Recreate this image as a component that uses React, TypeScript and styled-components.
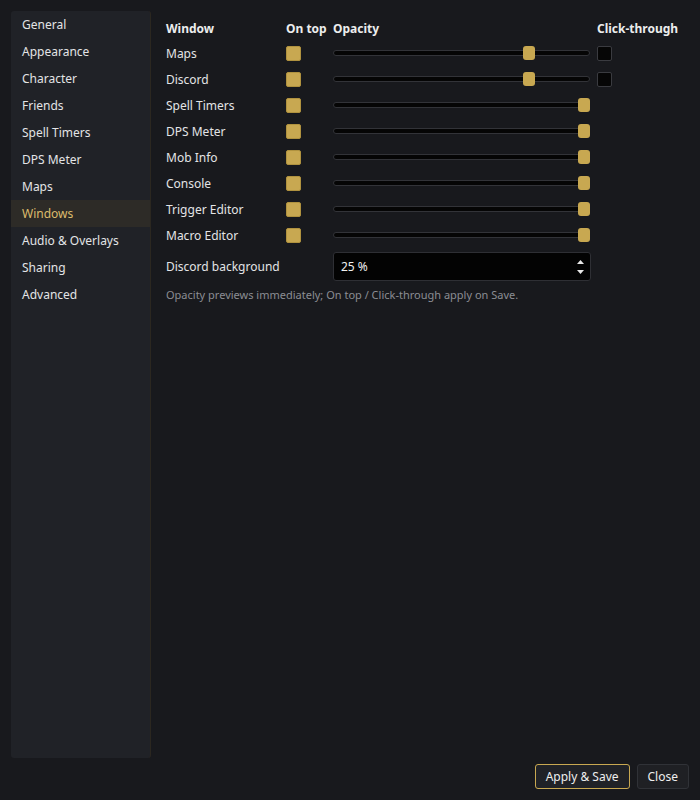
import React from 'react';
import styled, { createGlobalStyle } from 'styled-components';

const gold = '#c8a851';

const GlobalStyle = createGlobalStyle`
  html, body {
    margin: 0;
    padding: 0;
    background: #18191d;
  }
  body {
    font-family: "Noto Sans", "Open Sans", sans-serif;
    font-size: 12px;
    color: #e3e4e6;
  }
`;

const Shell = styled.div`
  box-sizing: border-box;
  height: 800px;
  padding: 11px;
  display: flex;
  flex-direction: column;
  gap: 6px;
`;

const Body = styled.div`
  flex: 1;
  display: flex;
  gap: 15px;
  min-height: 0;
`;

const Sidebar = styled.nav`
  width: 140px;
  background: #202227;
  border-radius: 3px;
  border-right: 1px solid #2b2720;
  box-sizing: border-box;
  display: flex;
  flex-direction: column;
`;

const NavItem = styled.div<{ active?: boolean }>`
  height: 27px;
  line-height: 27px;
  padding-left: 11px;
  color: ${({ active }) => (active ? '#dcbb6c' : '#e3e4e6')};
  background: ${({ active }) => (active ? '#2d2b27' : 'transparent')};
`;

const Content = styled.section`
  flex: 1;
  padding-top: 6px;
`;

const Grid = styled.div`
  display: grid;
  grid-template-columns: 120px 47px 257px auto;
  grid-auto-rows: 26px;
  grid-template-rows: 23px;
  align-items: center;
`;

const Head = styled.div<{ pad?: boolean }>`
  font-weight: 700;
  color: #eceded;
  padding-left: ${({ pad }) => (pad ? '7px' : '0')};
`;

const Label = styled.div`
  color: #e3e4e6;
`;

const Check = styled.div<{ on?: boolean }>`
  width: 15px;
  height: 15px;
  box-sizing: border-box;
  border-radius: 2px;
  background: ${({ on }) => (on ? gold : '#060606')};
  border: 1px solid ${({ on }) => (on ? '#b0923f' : '#3a3b40')};
  margin-left: ${({ on }) => (on ? '0' : '7px')};
`;

const Slider = styled.div`
  position: relative;
  height: 14px;
  display: flex;
  align-items: center;
`;

const Groove = styled.div`
  width: 100%;
  height: 6px;
  box-sizing: border-box;
  background: #050505;
  border: 1px solid #323338;
  border-radius: 3px;
`;

const Thumb = styled.div`
  position: absolute;
  top: 0;
  width: 12px;
  height: 14px;
  border-radius: 3px;
  background: ${gold};
`;

const FieldRow = styled.div`
  display: grid;
  grid-template-columns: 167px 258px;
  align-items: center;
  margin-top: 4px;
`;

const SpinBox = styled.div`
  height: 29px;
  box-sizing: border-box;
  background: #030303;
  border: 1px solid #2e2f34;
  border-radius: 3px;
  display: flex;
  align-items: center;
  justify-content: space-between;
  padding: 0 6px 0 7px;
  color: #f0f0f0;
`;

const Arrows = styled.div`
  display: flex;
  flex-direction: column;
  gap: 6px;
`;

const Hint = styled.p`
  margin: 6px 0 0;
  font-size: 11px;
  color: #8b8d93;
`;

const Footer = styled.div`
  display: flex;
  justify-content: flex-end;
  gap: 7px;
`;

const Button = styled.button<{ primary?: boolean }>`
  height: 25px;
  padding: 0 10px;
  font-family: inherit;
  font-size: 12px;
  color: #eeeeee;
  background: ${({ primary }) => (primary ? '#202227' : '#1f2024')};
  border: 1px solid ${({ primary }) => (primary ? gold : '#303237')};
  border-radius: 3px;
`;

const navItems = [
  'General', 'Appearance', 'Character', 'Friends', 'Spell Timers', 'DPS Meter',
  'Maps', 'Windows', 'Audio & Overlays', 'Sharing', 'Advanced',
];

type Win = { name: string; value: number; click?: boolean };

const windows: Win[] = [
  { name: 'Maps', value: 0.777, click: true },
  { name: 'Discord', value: 0.777, click: true },
  { name: 'Spell Timers', value: 1 },
  { name: 'DPS Meter', value: 1 },
  { name: 'Mob Info', value: 1 },
  { name: 'Console', value: 1 },
  { name: 'Trigger Editor', value: 1 },
  { name: 'Macro Editor', value: 1 },
];

const OpacitySlider = ({ value }: { value: number }) => (
  <Slider>
    <Groove />
    <Thumb style={{ left: `${Math.round(value * (257 - 12))}px` }} />
  </Slider>
);

export default function App() {
  return (
    <>
      <GlobalStyle />
      <Shell>
        <Body>
          <Sidebar>
            {navItems.map((n) => (
              <NavItem key={n} active={n === 'Windows'}>{n}</NavItem>
            ))}
          </Sidebar>
          <Content>
            <Grid>
              <Head>Window</Head>
              <Head>On top</Head>
              <Head>Opacity</Head>
              <Head pad>Click-through</Head>
              {windows.map((w) => (
                <React.Fragment key={w.name}>
                  <Label>{w.name}</Label>
                  <Check on />
                  <OpacitySlider value={w.value} />
                  <div>{w.click && <Check />}</div>
                </React.Fragment>
              ))}
            </Grid>
            <FieldRow>
              <Label>Discord background</Label>
              <SpinBox>
                <span>25 %</span>
                <Arrows>
                  <svg width="7" height="4" viewBox="0 0 7 4"><path d="M3.5 0L7 4H0z" fill="#e8e8e8" /></svg>
                  <svg width="7" height="4" viewBox="0 0 7 4"><path d="M0 0h7L3.5 4z" fill="#e8e8e8" /></svg>
                </Arrows>
              </SpinBox>
            </FieldRow>
            <Hint>Opacity previews immediately; On top / Click-through apply on Save.</Hint>
          </Content>
        </Body>
        <Footer>
          <Button primary>Apply &amp; Save</Button>
          <Button>Close</Button>
        </Footer>
      </Shell>
    </>
  );
}
